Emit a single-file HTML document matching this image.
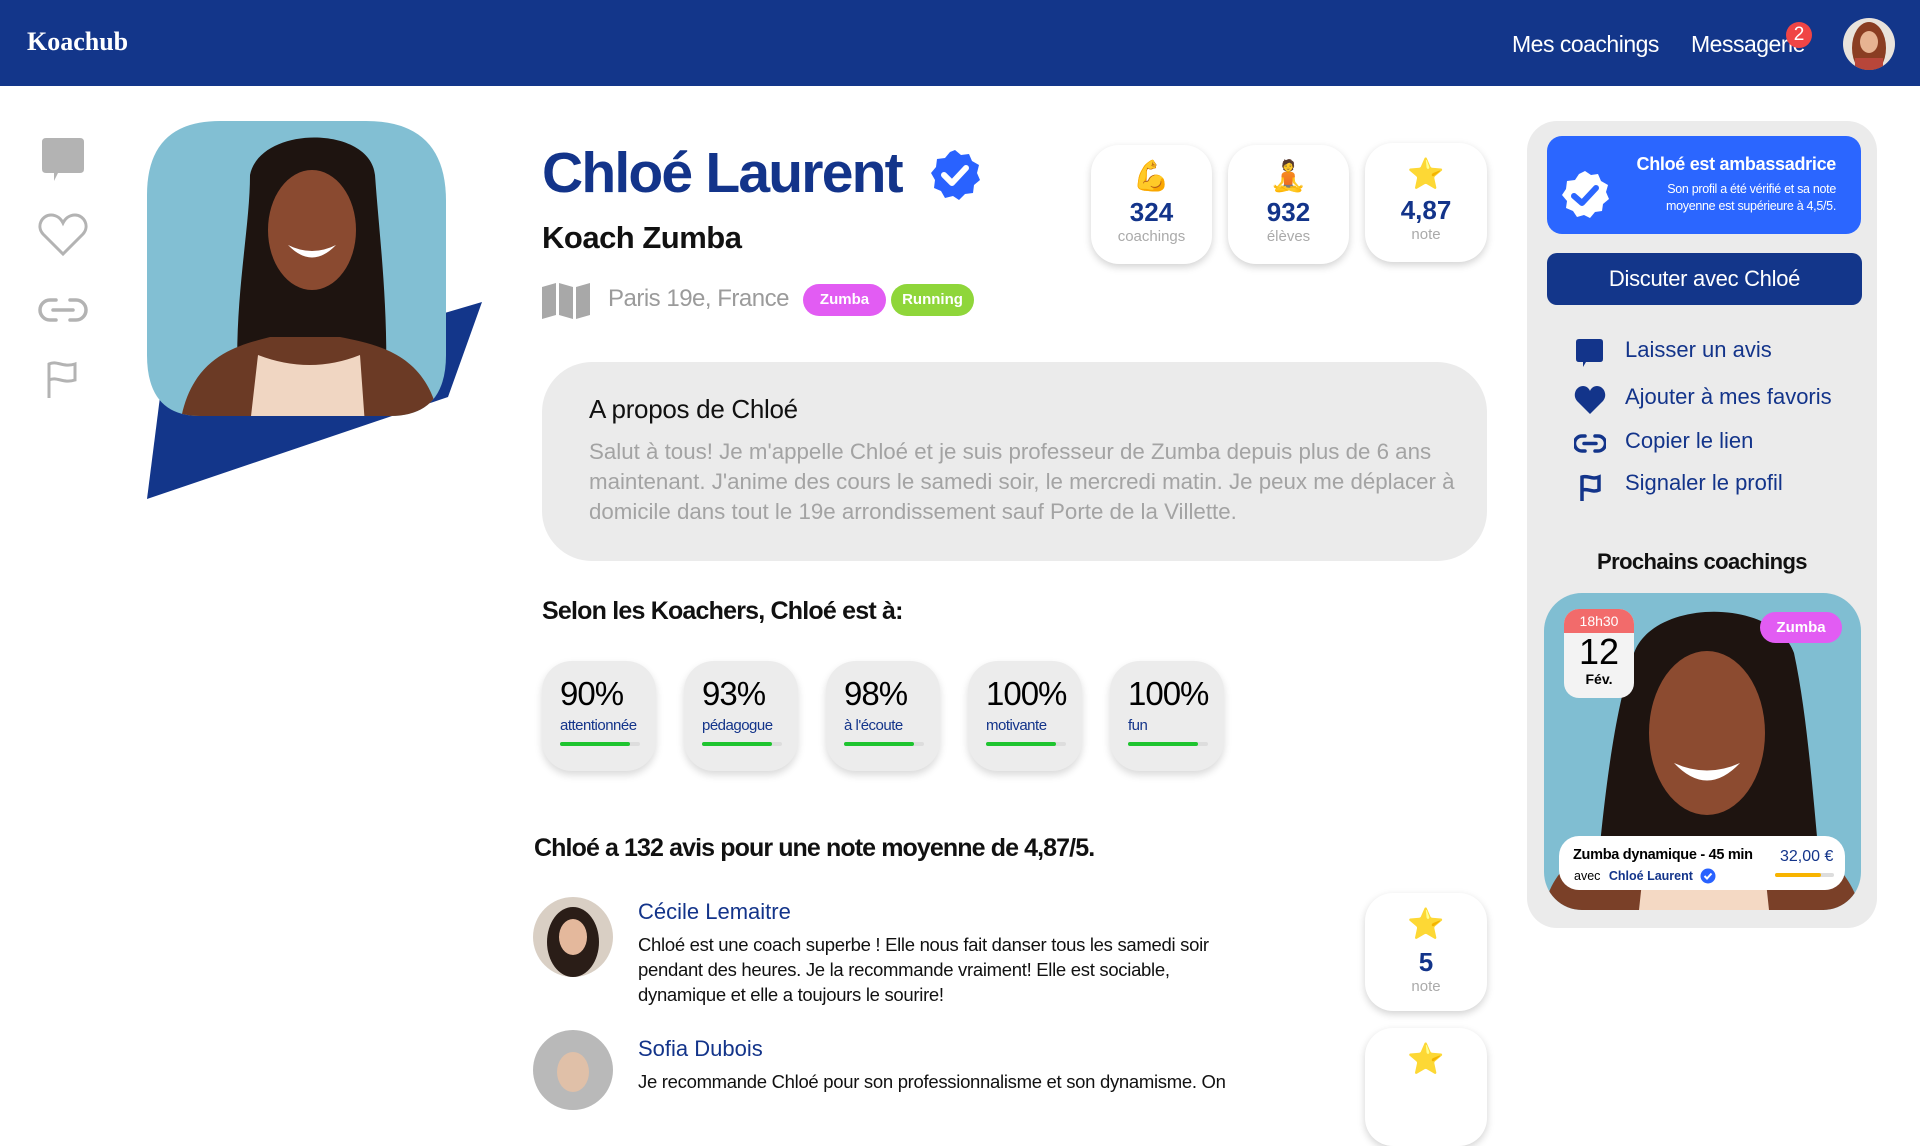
<!DOCTYPE html>
<html><head><meta charset="utf-8"><style>
*{margin:0;padding:0;box-sizing:border-box}
body{width:1920px;height:1087px;overflow:hidden;background:#fff;font-family:"Liberation Sans",sans-serif;position:relative;color:#111}
.a{position:absolute}
.hdr{left:0;top:0;width:1920px;height:86px;background:#13368a}
.blue{color:#13348a}
.card{background:#fff;border-radius:28px;box-shadow:0 3px 8px rgba(0,0,0,.18);text-align:center}
.skill{width:114px;height:110px;background:#ececec;border-radius:30px;box-shadow:0 4px 8px rgba(0,0,0,.15)}
.skill b{position:absolute;left:18px;top:14px;font-size:33px;font-weight:normal;color:#000;letter-spacing:-1px}
.skill i{position:absolute;left:18px;top:56px;font-size:15px;font-style:normal;color:#13348a;letter-spacing:-.5px}
.skill s{position:absolute;left:18px;top:81px;width:80px;height:4px;background:#ddd;border-radius:2px;text-decoration:none}
.skill s:after{content:"";position:absolute;left:0;top:0;width:70px;height:4px;background:#1ec42f;border-radius:2px}
.tag{border-radius:16px;color:#fff;font-size:15px;font-weight:bold;text-align:center}
.li{left:1625px;font-size:22px;color:#13348a}
.emo{font-size:30px;margin-top:14px;line-height:36px}
</style></head><body>
<div class="a hdr"></div>
<div class="a" style="left:27px;top:27px;font-family:'Liberation Serif',serif;font-weight:bold;font-size:26px;color:#fff">Koachub</div>
<div class="a" style="left:1512px;top:31px;font-size:23px;color:#fff;letter-spacing:-.5px">Mes coachings</div>
<div class="a" style="left:1691px;top:31px;font-size:23px;color:#fff;letter-spacing:-.5px">Messagerie</div>
<div class="a" style="left:1786px;top:22px;width:26px;height:26px;border-radius:50%;background:#f04545;color:#fff;font-size:19px;text-align:center;line-height:26px">2</div>
<svg class="a" style="left:1843px;top:18px" width="52" height="52"><defs><clipPath id="av"><circle cx="26" cy="26" r="26"/></clipPath></defs><g clip-path="url(#av)"><rect width="52" height="52" fill="#e9e3dc"/><ellipse cx="26" cy="30" rx="17" ry="26" fill="#8a3d22"/><ellipse cx="26" cy="24" rx="9" ry="11" fill="#e7b392"/><rect x="12" y="40" width="28" height="14" fill="#b8463a"/></g></svg>

<svg class="a" style="left:40px;top:138px" width="46" height="46"><path d="M2 4Q2 0 6 0H40Q44 0 44 4V31Q44 35 40 35H18L14 43V35H6Q2 35 2 31Z" fill="#b3b3b3"/></svg>
<svg class="a" style="left:38px;top:212px" width="50" height="46"><path d="M25 42L5 22C-2 14 4 3 13 3C19 3 23 7 25 11C27 7 31 3 37 3C46 3 52 14 45 22Z" fill="none" stroke="#b3b3b3" stroke-width="3"/></svg>
<svg class="a" style="left:38px;top:297px" width="50" height="28"><path d="M18 3H12A10 10 0 0 0 12 23H18M32 3H38A10 10 0 0 1 38 23H32M15 13H35" fill="none" stroke="#b3b3b3" stroke-width="3.5" stroke-linecap="round"/></svg>
<svg class="a" style="left:45px;top:360px" width="36" height="40"><path d="M4 38V4C12 0 18 8 30 4V20C18 24 12 16 4 20" fill="none" stroke="#b3b3b3" stroke-width="3"/></svg>

<svg class="a" style="left:140px;top:115px" width="350" height="390">
<polygon points="7,384 20,282 342,187 308,282" fill="#13368a"/>
<defs><clipPath id="ph"><path d="M80 6H226Q306 6 306 86V240Q306 301 250 301H60Q7 301 7 240V80Q7 6 80 6Z"/></clipPath></defs>
<g clip-path="url(#ph)">
<rect width="350" height="310" fill="#82bfd3"/>
<path d="M100 300C90 200 110 120 110 60C120 10 230 10 235 60C240 130 250 200 245 300Z" fill="#1e1410"/>
<path d="M40 310C50 240 100 230 130 222H200C240 230 290 240 300 310Z" fill="#6b3a25"/>
<path d="M118 240Q170 260 220 240L225 310H110Z" fill="#f0d6c2"/>
<ellipse cx="172" cy="115" rx="44" ry="60" fill="#8a4a30"/>
<path d="M148 130Q172 155 196 130Q172 142 148 130Z" fill="#fff"/>
</g></svg>

<div class="a blue" style="left:542px;top:140px;font-size:57px;font-weight:bold;letter-spacing:-1.8px">Chloé Laurent</div>
<svg class="a" style="left:928px;top:148px" width="54" height="54"><path d="M27 2L33 7L41 6L44 13L51 17L49 25L52 32L46 37L45 45L37 46L31 52L25 48L17 50L13 43L6 40L7 32L3 25L8 19L9 11L17 10L22 4Z" fill="#2962ff"/><path d="M16 27L24 35L38 20" fill="none" stroke="#fff" stroke-width="6" stroke-linecap="round" stroke-linejoin="round"/></svg>
<div class="a" style="left:542px;top:220px;font-size:31px;font-weight:bold;color:#111;letter-spacing:-.5px">Koach Zumba</div>
<svg class="a" style="left:542px;top:283px" width="48" height="36"><path d="M0 4L14 0V32L0 36ZM17 0L31 4V36L17 32ZM34 4L48 0V32L34 36Z" fill="#a8a8a8"/></svg>
<div class="a" style="left:608px;top:285px;font-size:24px;color:#9b9b9b;letter-spacing:-.5px">Paris 19e, France</div>
<div class="a tag" style="left:803px;top:284px;width:83px;height:32px;line-height:32px;background:#e25cf3">Zumba</div>
<div class="a tag" style="left:891px;top:284px;width:83px;height:32px;line-height:32px;background:#8fd63a">Running</div>

<div class="a card" style="left:1091px;top:145px;width:121px;height:119px"><div class="emo">💪</div><div class="blue" style="font-size:26px;font-weight:bold;margin-top:2px">324</div><div style="font-size:15px;color:#aaa">coachings</div></div>
<div class="a card" style="left:1228px;top:145px;width:121px;height:119px"><div class="emo">🧘</div><div class="blue" style="font-size:26px;font-weight:bold;margin-top:2px">932</div><div style="font-size:15px;color:#aaa">élèves</div></div>
<div class="a card" style="left:1365px;top:143px;width:122px;height:119px"><div class="emo">⭐</div><div class="blue" style="font-size:26px;font-weight:bold;margin-top:2px">4,87</div><div style="font-size:15px;color:#aaa">note</div></div>

<div class="a" style="left:542px;top:362px;width:945px;height:199px;background:#ebebeb;border-radius:50px"></div>
<div class="a" style="left:589px;top:394px;font-size:26px;color:#111;letter-spacing:-.3px">A propos de Chloé</div>
<div class="a" style="left:589px;top:437px;width:870px;font-size:22.3px;line-height:30px;color:#a3a3a3">Salut à tous! Je m'appelle Chloé et je suis professeur de Zumba depuis plus de 6 ans maintenant. J'anime des cours le samedi soir, le mercredi matin. Je peux me déplacer à domicile dans tout le 19e arrondissement sauf Porte de la Villette.</div>

<div class="a" style="left:542px;top:597px;font-size:25px;font-weight:bold;color:#111;letter-spacing:-.8px">Selon les Koachers, Chloé est à:</div>
<div class="a skill" style="left:542px;top:661px"><b>90%</b><i>attentionnée</i><s></s></div>
<div class="a skill" style="left:684px;top:661px"><b>93%</b><i>pédagogue</i><s></s></div>
<div class="a skill" style="left:826px;top:661px"><b>98%</b><i>à l'écoute</i><s></s></div>
<div class="a skill" style="left:968px;top:661px"><b>100%</b><i>motivante</i><s></s></div>
<div class="a skill" style="left:1110px;top:661px"><b>100%</b><i>fun</i><s></s></div>

<div class="a" style="left:534px;top:834px;font-size:25px;font-weight:bold;color:#111;letter-spacing:-.9px">Chloé a 132 avis pour une note moyenne de 4,87/5.</div>

<svg class="a" style="left:533px;top:897px" width="80" height="80"><circle cx="40" cy="40" r="40" fill="#d9cfc4"/><ellipse cx="40" cy="45" rx="26" ry="35" fill="#2a1d17"/><ellipse cx="40" cy="40" rx="14" ry="18" fill="#e4b89c"/></svg>
<div class="a blue" style="left:638px;top:899px;font-size:22px">Cécile Lemaitre</div>
<div class="a" style="left:638px;top:932px;width:620px;font-size:18.5px;line-height:25px;color:#111;letter-spacing:-.3px">Chloé est une coach superbe ! Elle nous fait danser tous les samedi soir pendant des heures. Je la recommande vraiment! Elle est sociable, dynamique et elle a toujours le sourire!</div>
<div class="a card" style="left:1365px;top:893px;width:122px;height:118px"><div class="emo">⭐</div><div class="blue" style="font-size:26px;font-weight:bold;margin-top:4px">5</div><div style="font-size:15px;color:#aaa">note</div></div>

<svg class="a" style="left:533px;top:1030px" width="80" height="80"><circle cx="40" cy="40" r="40" fill="#b9b9b9"/><ellipse cx="40" cy="42" rx="16" ry="20" fill="#e0c0a8"/></svg>
<div class="a blue" style="left:638px;top:1036px;font-size:22px">Sofia Dubois</div>
<div class="a" style="left:638px;top:1069px;width:620px;font-size:18.5px;line-height:25px;color:#111;letter-spacing:-.3px;white-space:nowrap">Je recommande Chloé pour son professionnalisme et son dynamisme. On</div>
<div class="a card" style="left:1365px;top:1028px;width:122px;height:118px"><div class="emo">⭐</div></div>

<div class="a" style="left:1527px;top:121px;width:350px;height:807px;background:#ebebeb;border-radius:30px"></div>
<div class="a" style="left:1547px;top:136px;width:314px;height:98px;background:#2b66ff;border-radius:15px"></div>
<svg class="a" style="left:1560px;top:170px" width="50" height="50"><path d="M25 1L31 5L38 4L41 11L48 15L46 22L49 29L43 34L42 41L35 42L30 48L24 45L17 47L13 41L6 38L7 31L2 25L6 19L7 11L15 10L19 4Z" fill="#fff"/><path d="M14 26L22 33L36 18" fill="none" stroke="#2b66ff" stroke-width="6" stroke-linecap="round" stroke-linejoin="round"/></svg>
<div class="a" style="left:1600px;top:154px;width:236px;text-align:right;color:#fff;font-size:18px;font-weight:bold;letter-spacing:-.3px">Chloé est ambassadrice</div>
<div class="a" style="left:1640px;top:181px;width:196px;text-align:right;color:#fff;font-size:12.5px;line-height:17px;letter-spacing:-.3px">Son profil a été vérifié et sa note moyenne est supérieure à 4,5/5.</div>
<div class="a" style="left:1547px;top:253px;width:315px;height:52px;background:#13368a;border-radius:10px;color:#fff;font-size:22px;text-align:center;line-height:52px;letter-spacing:-.3px">Discuter avec Chloé</div>

<svg class="a" style="left:1575px;top:338px" width="30" height="30"><path d="M1 4Q1 1 4 1H25Q28 1 28 4V21Q28 24 25 24H11L8 29V24H4Q1 24 1 21Z" fill="#13348a"/></svg>
<div class="a li" style="top:337px">Laisser un avis</div>
<svg class="a" style="left:1574px;top:385px" width="32" height="30"><path d="M16 29L3 16C-2 10 2 1 9 1C12 1 15 3 16 6C17 3 20 1 23 1C30 1 34 10 29 16Z" fill="#13348a"/></svg>
<div class="a li" style="top:384px">Ajouter à mes favoris</div>
<svg class="a" style="left:1574px;top:434px" width="32" height="20"><path d="M11 2H8A7 7 0 0 0 8 17H11M21 2H24A7 7 0 0 1 24 17H21M10 9.5H22" fill="none" stroke="#13348a" stroke-width="3.5" stroke-linecap="round"/></svg>
<div class="a li" style="top:428px">Copier le lien</div>
<svg class="a" style="left:1579px;top:474px" width="24" height="28"><path d="M3 27V3C9 1 13 6 20 3V16C13 19 9 14 3 16" fill="none" stroke="#13348a" stroke-width="3.5"/></svg>
<div class="a li" style="top:470px">Signaler le profil</div>

<div class="a" style="left:1527px;top:549px;width:350px;text-align:center;font-size:22px;font-weight:bold;color:#111;letter-spacing:-.6px">Prochains coachings</div>

<svg class="a" style="left:1544px;top:593px" width="317" height="317">
<defs><clipPath id="cc"><rect width="317" height="317" rx="38"/></clipPath></defs>
<g clip-path="url(#cc)">
<rect width="317" height="317" fill="#80bed2"/>
<path d="M50 317C60 200 70 120 90 60C110 5 230 5 250 60C265 130 270 220 280 317Z" fill="#1e1410"/>
<path d="M0 317C10 260 60 250 100 245H220C260 250 300 260 317 317Z" fill="#7a4028"/>
<path d="M100 270Q160 290 220 270L225 317H95Z" fill="#f4d9c4"/>
<ellipse cx="163" cy="140" rx="58" ry="82" fill="#8c4b30"/>
<path d="M130 170Q163 205 196 170Q163 185 130 170Z" fill="#fff"/>
</g></svg>
<div class="a" style="left:1564px;top:609px;width:70px;height:89px;background:#f3f3f3;border-radius:15px;overflow:hidden;text-align:center">
<div style="background:#f26b6b;color:#fff;font-size:14px;height:24px;line-height:24px">18h30</div>
<div style="font-size:36px;color:#000;line-height:38px">12</div>
<div style="font-size:14px;font-weight:bold;color:#000">Fév.</div></div>
<div class="a tag" style="left:1760px;top:612px;width:82px;height:31px;line-height:31px;background:#e25cf3">Zumba</div>
<div class="a" style="left:1559px;top:836px;width:286px;height:54px;background:#fff;border-radius:20px"></div>
<div class="a" style="left:1573px;top:847px;font-size:14.5px;font-weight:bold;color:#000;letter-spacing:-.3px">Zumba dynamique - 45 min</div>
<div class="a" style="left:1574px;top:869px;font-size:12.5px;color:#000">avec <span class="blue" style="font-weight:bold;margin-left:5px">Chloé Laurent</span></div>
<svg class="a" style="left:1700px;top:868px" width="16" height="16"><circle cx="8" cy="8" r="7.5" fill="#2962ff"/><path d="M4.5 8L7 10.5L11.5 5.5" fill="none" stroke="#fff" stroke-width="2"/></svg>
<div class="a blue" style="left:1780px;top:848px;font-size:16px">32,00 €</div>
<div class="a" style="left:1775px;top:873px;width:59px;height:4px;background:#ddd;border-radius:2px"><div style="width:46px;height:4px;background:#f8b400;border-radius:2px"></div></div>
</body></html>
